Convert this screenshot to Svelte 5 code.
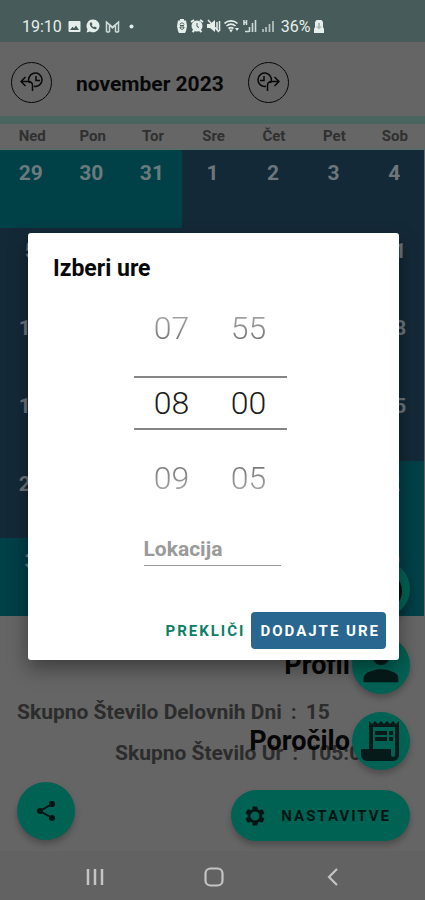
<script>
  const weekdays = ["Ned", "Pon", "Tor", "Sre", "Čet", "Pet", "Sob"];

  // october tail, november, december head
  const days = [
    ...[29, 30, 31].map((n) => ({ n, other: true })),
    ...Array.from({ length: 30 }, (_, i) => ({ n: i + 1, other: false })),
    ...Array.from({ length: 9 }, (_, i) => ({ n: i + 1, other: true })),
  ];

  let hour = $state(8);
  let minute = $state(0);
  let location = $state("");
  let open = $state(true);

  const pad = (n) => String(n).padStart(2, "0");
  const wrap = (n, max) => (n + max) % max;
</script>

<div class="screen">
  <header class="status">
    <div class="status__group">
      <span class="status__time">19:10</span>
      <svg width="13" height="13" viewBox="0 0 13 13"><path fill="#e6eeec" fill-rule="evenodd" d="M1.500 1h10a1 1 0 0 1 1 1v9a1 1 0 0 1-1 1h-10a1 1 0 0 1-1-1V2a1 1 0 0 1 1-1zM2 10h9L8 5.500 6 8.200 4.500 6.800z" /></svg>
      <svg width="14" height="14" viewBox="0 0 14 14"><path fill="#e6eeec" d="M7 .5a6.400 6.400 0 1 1-3 12L.5 13.500l1-3.300A6.400 6.400 0 0 1 7 .5z" /><path fill="#475c5a" d="M4.300 3.500l1.200-.2.900 1.900-.7 1c.5 1 1.200 1.600 2.200 2.100l.9-.8 1.900.9c0 1.600-1.300 2.100-2.600 1.700C5.800 9.300 4.300 7.800 3.800 5.600c-.2-.9 0-1.500.5-2.100z" /></svg>
      <svg width="15" height="13" viewBox="0 0 15 13"><path fill="none" stroke="#cfdbd9" stroke-width="1.500" d="M1.500 12V2l6 5 6-5v10M4.500 12V5l3 3 3-3v7M1.500 12h3M10.500 12h3M1 1.500l3 3M14 1.500l-3 3" /></svg>
      <svg class="status__more" width="5" height="5" viewBox="0 0 5 5"><circle cx="2.500" cy="2.500" r="2" fill="#e6eeec" /></svg>
    </div>
    <div class="status__group status__group--right">
      <svg width="10" height="14" viewBox="0 0 10 14"><path fill="#e6eeec" d="M3 0h4v1.500h2l1 5.500-1 5-1 2H2l-1-2-1-5 1-5.500h2z" /><path fill="none" stroke="#475c5a" d="M3 5.500C3 3.500 7 3.500 7 5.500M3 8c0 3 4 3 4 0zM3 6.500h4" /></svg>
      <svg width="14" height="14" viewBox="0 0 14 14"><path stroke="#e6eeec" stroke-width="2" d="M1 3l3-2M13 3l-3-2M2.500 13l2-2M11.500 13l-2-2" /><circle cx="7" cy="7" r="5.500" fill="#e6eeec" /><path fill="none" stroke="#475c5a" d="M7 4v3.500l2 1" /></svg>
      <svg width="14" height="14" viewBox="0 0 14 14"><path fill="#e6eeec" d="M0 5h3l5-4v12L3 9H0z" /><path stroke="#e6eeec" stroke-width="1.500" d="M1 1l11 12M10 3v8M12.500 2v10" /></svg>
      <svg width="16" height="14" viewBox="0 0 16 14"><path fill="none" stroke="#e6eeec" stroke-width="1.600" d="M.5 4.500C4 1 10 1 13.500 4.500M2.500 7c3-2.500 6-2.500 9 0M4.500 9.500c2-1.500 3-1.500 5 0" /><path fill="#e6eeec" d="M5 10.500h4l-2 3zM11 9l2 3 2-3z" /></svg>
      <svg width="14" height="14" viewBox="0 0 14 14"><path stroke="#cfdbd9" stroke-width="1.600" d="M1 1v5M3.500 1v5M1 3.500h3M2 12.500h4M6.500 13V8M9.500 13V4M12.500 13V1" /></svg>
      <svg class="status__signal" width="12" height="14" viewBox="0 0 12 14"><path stroke="#b4c2c0" stroke-width="1.700" d="M1 13v-3M4 13V8M7.500 13V5M11 13V2" /></svg>
      <span class="status__battery">36%</span>
      <svg width="10" height="13" viewBox="0 0 10 13"><path fill="#e6eeec" d="M2.500 0h5L9 2v5l1 2v4H0V9l1-2V2z" /><path stroke="#6f8280" d="M5 3v4M3 6.500l2 2 2-2" fill="none" /></svg>
    </div>
  </header>

  <div class="month">
    <button class="month__nav" aria-label="Prejšnji mesec">
      <svg width="24" height="20" viewBox="0 0 24 20" fill="none" stroke="#080808" stroke-width="1.500"><path d="M9.500 11a6.700 6.700 0 1 1 4.500 3.300M16 4v4.500h4M1 9.500h8.500M5.500 5L1 9.500 5.500 14M9 9.500c2.500.5 3.500 2 3.500 4V19" /></svg>
    </button>
    <h1 class="month__title">november 2023</h1>
    <button class="month__nav" aria-label="Naslednji mesec">
      <svg width="24" height="20" viewBox="0 0 24 20" fill="none" stroke="#080808" stroke-width="1.500"><path d="M14.500 11A6.700 6.700 0 1 0 10 14.300M8 4v4.500H4M23 9.500h-8.500M18.500 5L23 9.500 18.500 14M15 9.500c-2.500.5-3.500 2-3.500 4V19" /></svg>
    </button>
  </div>

  <div class="weekdays">
    {#each weekdays as day}<span>{day}</span>{/each}
  </div>

  <div class="calendar">
    {#each days as day}
      <div class="day" class:day--other={day.other}>{day.n}</div>
    {/each}
  </div>

  <section class="summary">
    <p><span>Skupno Število Delovnih Dni</span><span>:</span><span>15</span></p>
    <p class="summary__hours"><span>Skupno Število Ur</span><span>:</span><span>105:00</span></p>
    <button class="fab" aria-label="Deli">
      <svg width="24" height="24" viewBox="0 0 24 24"><path stroke="#001512" stroke-width="2" fill="none" d="M18 5L6 12l12 7" /><g fill="#001512"><circle cx="18" cy="5" r="3" /><circle cx="6" cy="12" r="3" /><circle cx="18" cy="19" r="3" /></g></svg>
    </button>
  </section>

  <div class="menu">
    <button class="fab" aria-label="Dodaj">
      <svg width="44" height="44" viewBox="0 0 44 44" fill="#001512"><circle cx="22" cy="24" r="21" /></svg>
    </button>
    <div class="menu__item">
      <label for="profil">Profil</label>
      <button class="fab" id="profil">
        <svg width="52" height="52" viewBox="0 0 24 24" fill="#061a1a"><path d="M12 12a4 4 0 1 0 0-8 4 4 0 0 0 0 8zm0 2c-2.700 0-8 1.300-8 4v2h16v-2c0-2.700-5.300-4-8-4z" /></svg>
      </button>
    </div>
    <div class="menu__item">
      <label for="porocilo">Poročilo</label>
      <button class="fab" id="porocilo">
        <svg width="48" height="48" viewBox="0 0 24 24" fill="#061a1a"><path d="M19.500 3.500L18 2l-1.500 1.500L15 2l-1.500 1.500L12 2l-1.500 1.500L9 2 7.500 3.500 6 2v14H2v3a3 3 0 0 0 3 3h13a3 3 0 0 0 3-3V2zM19 19a1 1 0 0 1-2 0v-3H8V5h11z" /><path d="M9 7h6v2H9zM16 7h2v2h-2zM9 10h6v2H9zM16 10h2v2h-2z" /></svg>
      </button>
    </div>
    <button class="settings">
      <svg width="24" height="24" viewBox="0 0 24 24"><path fill="#001512" d="M19.140 12.940c.04-.3.060-.61.060-.94s-.02-.64-.07-.94l2.030-1.580a.49.49 0 0 0 .12-.61l-1.920-3.320a.49.49 0 0 0-.59-.22l-2.390.96a7 7 0 0 0-1.620-.94l-.36-2.540A.48.48 0 0 0 13.920 2.400h-3.840a.48.48 0 0 0-.48.410l-.36 2.540a7 7 0 0 0-1.620.94l-2.390-.96a.48.48 0 0 0-.59.22L2.740 8.870a.48.48 0 0 0 .12.610l2.030 1.580a6 6 0 0 0 0 1.880l-2.030 1.580a.49.49 0 0 0-.12.610l1.920 3.320c.12.220.37.290.59.220l2.390-.96c.5.380 1.030.7 1.620.94l.36 2.540c.05.240.24.410.48.410h3.840c.24 0 .44-.17.47-.41l.36-2.540a7 7 0 0 0 1.620-.94l2.390.96c.22.080.47 0 .59-.22l1.920-3.320a.48.48 0 0 0-.12-.61zM12 16.500a4.500 4.500 0 1 1 0-9 4.500 4.500 0 0 1 0 9z" /></svg>
      Nastavitve
    </button>
  </div>

  <nav class="navbar">
    <button aria-label="Nedavno"><svg width="20" height="20" viewBox="0 0 20 20"><path stroke="#c4c4c4" stroke-width="2.500" d="M3 2v16M10 2v16M17 2v16" /></svg></button>
    <button aria-label="Domov"><svg width="20" height="20" viewBox="0 0 20 20"><rect x="1.500" y="1.500" width="17" height="17" rx="5" fill="none" stroke="#c4c4c4" stroke-width="2.200" /></svg></button>
    <button aria-label="Nazaj"><svg width="20" height="20" viewBox="0 0 20 20"><path fill="none" stroke="#c4c4c4" stroke-width="2.200" d="M14 2l-8 8 8 8" /></svg></button>
  </nav>

  {#if open}
    <div class="overlay">
      <div class="dialog" role="dialog" aria-labelledby="dialog-title">
        <h2 class="dialog__title" id="dialog-title">Izberi ure</h2>
        <div class="picker">
          <div class="picker__row picker__row--above">
            <button onclick={() => (hour = wrap(hour - 1, 24))}>{pad(wrap(hour - 1, 24))}</button>
            <button onclick={() => (minute = wrap(minute - 5, 60))}>{pad(wrap(minute - 5, 60))}</button>
          </div>
          <div class="picker__row picker__row--current">
            <input aria-label="Ura" value={pad(hour)} readonly />
            <input aria-label="Minuta" value={pad(minute)} readonly />
          </div>
          <div class="picker__row picker__row--below">
            <button onclick={() => (hour = wrap(hour + 1, 24))}>{pad(wrap(hour + 1, 24))}</button>
            <button onclick={() => (minute = wrap(minute + 5, 60))}>{pad(wrap(minute + 5, 60))}</button>
          </div>
        </div>
        <input class="dialog__location" aria-label="Lokacija" placeholder="Lokacija" bind:value={location} />
        <div class="dialog__actions">
          <button class="btn" onclick={() => (open = false)}>Prekliči</button>
          <button class="btn btn--primary" onclick={() => (open = false)}>Dodajte ure</button>
        </div>
      </div>
    </div>
  {/if}
</div>

<style>
  :global(body) {
    margin: 0;
    background: #656565;
  }

  .screen {
    position: relative;
    display: flex;
    flex-direction: column;
    min-height: 100vh;
    overflow: hidden;
    background: #656565;
    font-family: Roboto, sans-serif;
  }

  button,
  input {
    padding: 0;
    border: 0;
    background: none;
    font: inherit;
    color: inherit;
  }

  h1,
  h2,
  p {
    margin: 0;
  }

  svg {
    display: block;
    flex: none;
  }

  .status {
    display: flex;
    gap: 43px;
    height: 42px;
    padding: 10px 22px 0;
    box-sizing: border-box;
    background: #475c5a;
    color: #e6eeec;
    font-size: 16px;
  }

  .status__group {
    display: flex;
    align-items: center;
    gap: 5px;
  }

  .status__group--right {
    gap: 3px;
  }

  .status__time {
    margin-right: 1px;
  }

  .status__more {
    margin-left: 4px;
  }

  .status__signal {
    margin: 0 4px 0 2px;
  }

  .month {
    display: flex;
    align-items: center;
    gap: 24px;
    height: 74px;
    padding: 0 11px;
  }

  .month__nav {
    display: grid;
    place-items: center;
    width: 41px;
    height: 41px;
    margin-top: 6px;
    border: 1px solid #080808;
    border-radius: 50%;
    box-sizing: border-box;
  }

  .month__title {
    margin-top: 10px;
    font-size: 21px;
    line-height: 24px;
    font-weight: 700;
    color: #080808;
  }

  .weekdays {
    display: grid;
    grid-template-columns: repeat(7, 1fr);
    height: 34px;
    padding: 0 0 0 2px;
    border-top: 8px solid #49665e;
    border-bottom: 2px solid #5b6b67;
    box-sizing: border-box;
    background: #666;
    color: #303030;
    font-size: 15px;
    line-height: 24px;
    font-weight: 700;
    text-align: center;
  }

  .calendar {
    display: grid;
    grid-template-columns: repeat(7, 1fr);
    grid-template-rows: repeat(6, minmax(60px, 1fr));
    flex: 1;
    margin-right: 1px;
  }

  .day {
    padding-top: 11px;
    padding-left: 1px;
    background: #142938;
    color: #6e767c;
    font-size: 21px;
    line-height: 24px;
    font-weight: 700;
    text-align: center;
  }

  .day--other {
    background: #004047;
    color: #6b7b7d;
  }

  .summary {
    display: flex;
    flex-direction: column;
    gap: 17px;
    height: 235px;
    padding: 84px 17px 0;
    box-sizing: border-box;
    color: #2c2c2c;
    font-size: 21px;
    line-height: 24px;
    font-weight: 700;
  }

  .summary p {
    display: flex;
    gap: 9px;
    white-space: nowrap;
  }

  .summary .summary__hours {
    padding-left: 98px;
  }

  .fab {
    display: grid;
    place-items: center;
    flex: none;
    width: 58px;
    height: 58px;
    border-radius: 50%;
    background: #006253;
    box-shadow: 0 4px 6px rgba(0, 0, 0, 0.25);
  }

  .menu {
    position: absolute;
    right: 15px;
    bottom: 59px;
    display: flex;
    flex-direction: column;
    align-items: flex-end;
    gap: 18px;
  }

  .menu__item {
    display: flex;
    align-items: center;
    gap: 2px;
    color: #060606;
    font-size: 27px;
    line-height: 28px;
    font-weight: 700;
  }

  .settings {
    display: flex;
    align-items: center;
    gap: 14px;
    height: 51px;
    padding: 0 19px 0 12px;
    margin-top: 2px;
    border-radius: 26px;
    background: #006253;
    box-shadow: 0 4px 6px rgba(0, 0, 0, 0.25);
    color: #001512;
    font-size: 15px;
    font-weight: 700;
    letter-spacing: 2px;
    text-transform: uppercase;
  }

  .navbar {
    display: flex;
    align-items: center;
    justify-content: space-around;
    height: 49px;
    padding: 2px 32px 0 35px;
    box-sizing: border-box;
    background: #626262;
  }

  .overlay {
    position: absolute;
    inset: 0;
    display: grid;
    align-items: center;
    padding: 42px 26px 49px 28px;
  }

  .dialog {
    display: flex;
    flex-direction: column;
    align-items: center;
    padding: 23px 13px 11px;
    border-radius: 3px;
    background: #fff;
    box-shadow: 0 8px 20px rgba(0, 0, 0, 0.4);
  }

  .dialog__title {
    align-self: flex-start;
    margin-left: 12px;
    font-size: 23px;
    line-height: 26px;
    font-weight: 700;
    color: #080808;
  }

  .picker {
    width: 153px;
    margin-top: 21px;
    margin-right: 7px;
    font-size: 32px;
    line-height: 50px;
    font-weight: 300;
    color: #1c1c1c;
  }

  .picker__row {
    display: grid;
    grid-template-columns: 36px 36px;
    justify-content: center;
    gap: 41px;
    height: 50px;
  }

  .picker__row input {
    width: 36px;
    text-align: center;
  }

  .picker__row--current {
    margin: 23px 0;
    border-top: 2px solid #858585;
    border-bottom: 2px solid #858585;
  }

  .picker__row--above {
    mask-image: linear-gradient(to top, rgba(0, 0, 0, 0.7), rgba(0, 0, 0, 0.3));
  }

  .picker__row--below {
    mask-image: linear-gradient(to bottom, rgba(0, 0, 0, 0.7), rgba(0, 0, 0, 0.3));
  }

  .dialog__location {
    width: 137px;
    height: 32px;
    margin-top: 30px;
    margin-right: 3px;
    border-bottom: 1px solid #9a9a9a;
    font-size: 21px;
    font-weight: 700;
    color: #222;
  }

  .dialog__location::placeholder {
    color: #9a9a9a;
    opacity: 1;
  }

  .dialog__actions {
    display: flex;
    align-self: flex-end;
    gap: 6px;
    margin-top: 46px;
  }

  .btn {
    height: 37px;
    border-radius: 4px;
    color: #0c7e66;
    font-size: 15px;
    font-weight: 700;
    letter-spacing: 2px;
    text-transform: uppercase;
  }

  .btn--primary {
    padding: 0 6px 0 9px;
    background: #296791;
    color: #fff;
  }
</style>
